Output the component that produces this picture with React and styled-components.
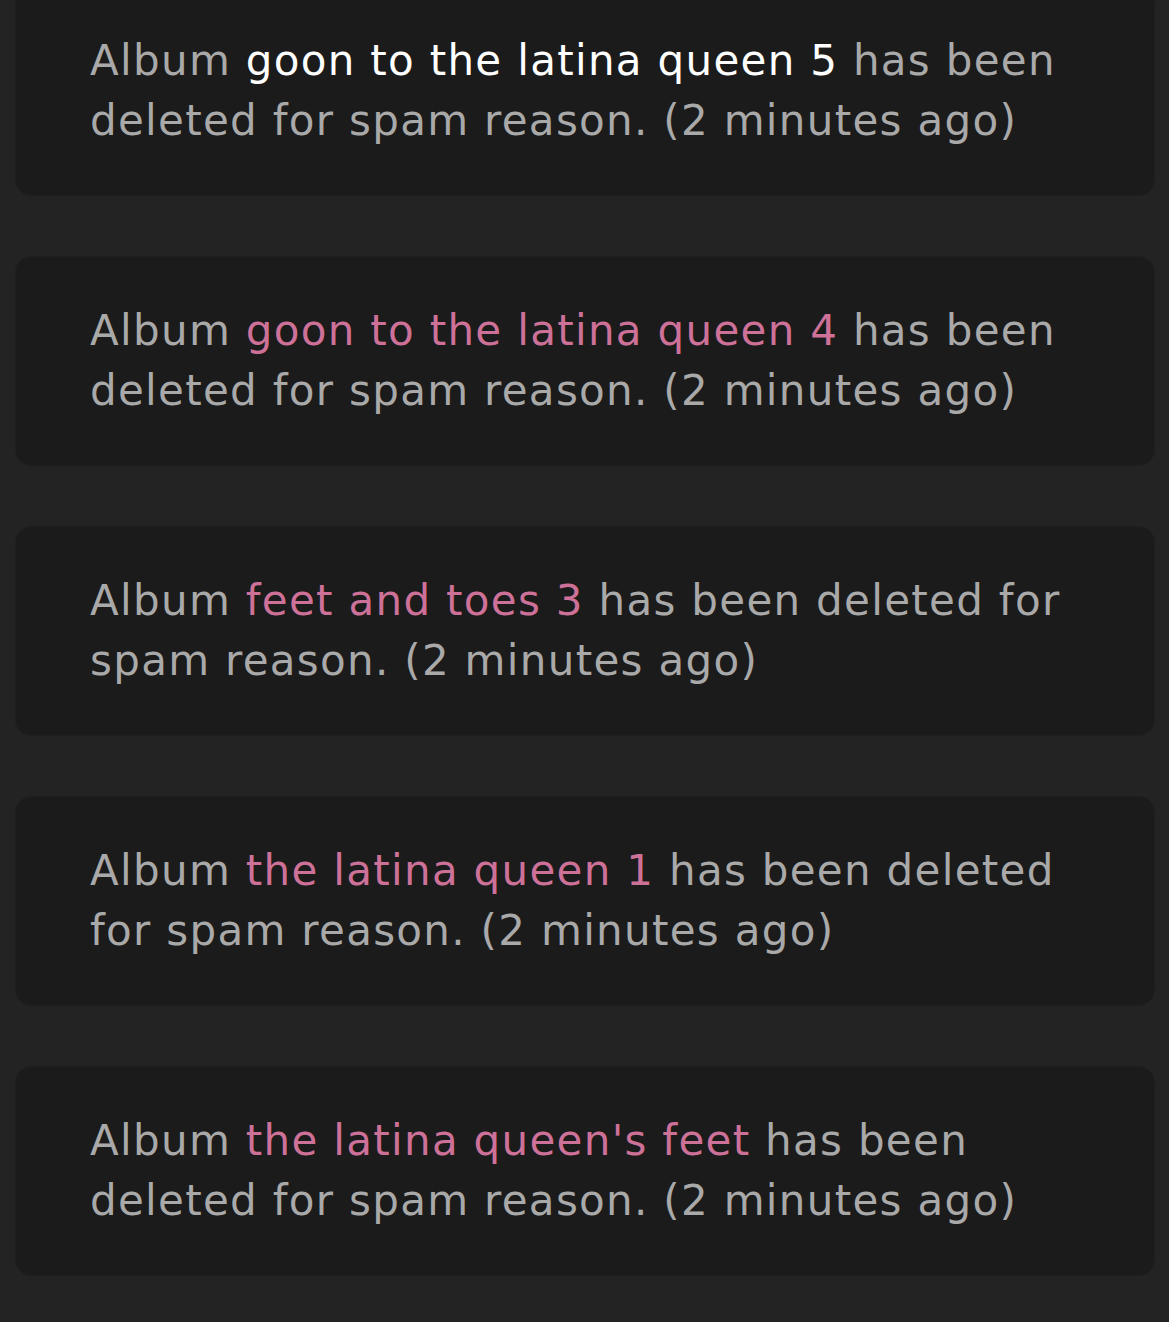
import React from "react";
import styled, { createGlobalStyle } from "styled-components";

const GlobalStyle = createGlobalStyle`
  html, body {
    margin: 0;
    padding: 0;
    background: #232323;
  }
  body {
    font-family: "DejaVu Sans", "Open Sans", sans-serif;
  }
`;

const notifications = [
  { id: 5, title: "goon to the latina queen 5", read: true },
  { id: 4, title: "goon to the latina queen 4" },
  { id: 3, title: "feet and toes 3" },
  { id: 1, title: "the latina queen 1" },
  { id: 6, title: "the latina queen's feet" },
];

export default function App() {
  return (
    <>
      <GlobalStyle />
      <List>
        {notifications.map((item) => (
          <Card key={item.id}>
            <Message>
              Album <AlbumName $read={item.read}>{item.title}</AlbumName> has
              been deleted for spam reason. (2 minutes ago)
            </Message>
          </Card>
        ))}
      </List>
    </>
  );
}

const List = styled.div`
  display: flex;
  flex-direction: column;
  gap: 60px;
  padding: 0 14px 45px 15px;
  margin-top: -14px;
`;

const Card = styled.div`
  box-sizing: border-box;
  height: 210px;
  padding: 45px 74px;
  background-color: #1b1b1b;
  border: 1px solid #1f1f1f;
  border-radius: 16px;
  display: flex;
  align-items: center;
`;

const Message = styled.p`
  margin: 0;
  font-size: 42px;
  font-weight: 400;
  line-height: 60px;
  letter-spacing: 1.3px;
  color: #a9a9a9;
`;

const AlbumName = styled.span`
  color: ${(p) => (p.$read ? "#ffffff" : "#cd7199")};
`;
